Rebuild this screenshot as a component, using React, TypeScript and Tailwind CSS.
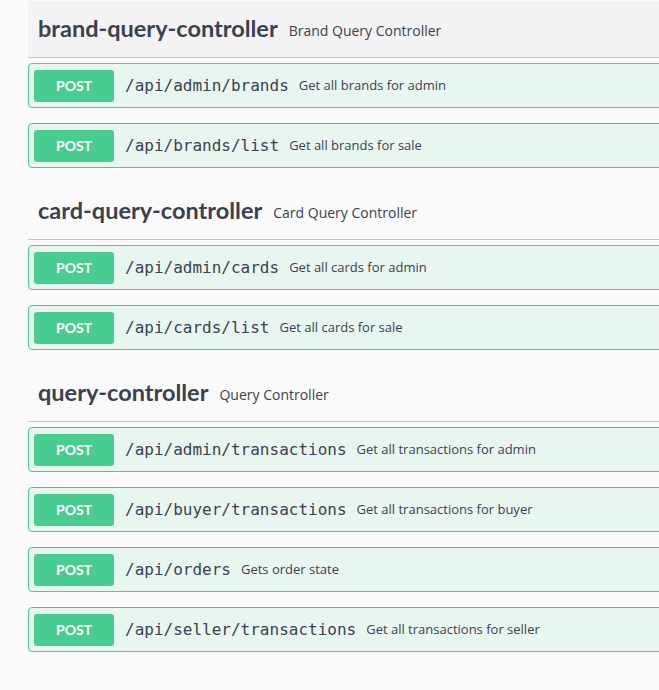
import React from "react";

type Op = { path: string; summary: string };
type Section = { name: string; description: string; ops: Op[]; hovered?: boolean };

const sections: Section[] = [
  {
    name: "brand-query-controller",
    description: "Brand Query Controller",
    hovered: true,
    ops: [
      { path: "/api/admin/brands", summary: "Get all brands for admin" },
      { path: "/api/brands/list", summary: "Get all brands for sale" },
    ],
  },
  {
    name: "card-query-controller",
    description: "Card Query Controller",
    ops: [
      { path: "/api/admin/cards", summary: "Get all cards for admin" },
      { path: "/api/cards/list", summary: "Get all cards for sale" },
    ],
  },
  {
    name: "query-controller",
    description: "Query Controller",
    ops: [
      { path: "/api/admin/transactions", summary: "Get all transactions for admin" },
      { path: "/api/buyer/transactions", summary: "Get all transactions for buyer" },
      { path: "/api/orders", summary: "Gets order state" },
      { path: "/api/seller/transactions", summary: "Get all transactions for seller" },
    ],
  },
];

function OpBlock({ op }: { op: Op }) {
  return (
    <div className="mb-[15px] flex h-[45px] items-center rounded-[4px] border border-[#49cc90] bg-[#e8f6f0] px-[5px]">
      <span className="flex h-[32px] w-[80px] shrink-0 items-center justify-center rounded-[3px] bg-[#49cc90] font-['Lato',sans-serif] text-[14px] font-bold text-white">
        POST
      </span>
      <span className="pl-[11px] pr-[10px] pt-[1px] font-['DejaVu_Sans_Mono',monospace] text-[16px] text-[#3b4151]">
        {op.path}
      </span>
      <span className="pt-[1px] font-['Open_Sans',sans-serif] text-[13px] text-[#3b4151]">
        {op.summary}
      </span>
    </div>
  );
}

export default function App() {
  return (
    <div className="min-h-screen w-full overflow-hidden bg-[#fafafa] pt-[1px]">
      <div className="w-[720px] pl-[28px]">
        {sections.map((s) => (
          <div key={s.name}>
            <div
              className={
                "flex h-[57px] items-center border-b border-[#c4c6ca] pl-[10px] " +
                (s.hovered ? "bg-[#f3f3f3]" : "")
              }
            >
              <span className="font-['Lato',sans-serif] text-[23.5px] font-bold text-[#3b4151]">
                {s.name}
              </span>
              <span className="pl-[11px] pt-[2px] font-['Open_Sans',sans-serif] text-[14px] text-[#3b4151]">
                {s.description}
              </span>
            </div>
            <div className="pt-[5px]">
              {s.ops.map((op) => (
                <OpBlock key={op.path} op={op} />
              ))}
            </div>
          </div>
        ))}
      </div>
    </div>
  );
}
